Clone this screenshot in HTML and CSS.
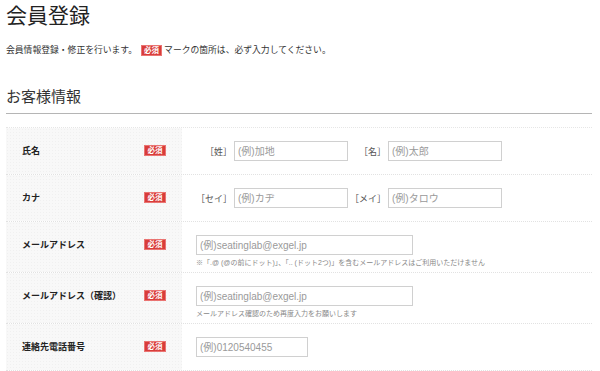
FILE: index.html
```html
<!DOCTYPE html>
<html lang="ja">
<head>
    <meta charset="UTF-8">
    <meta name="viewport" content="width=device-width, initial-scale=1.0">
    <title>会員登録</title>
    <link rel="stylesheet" href="styles.css">
</head>
<body>
    <h1 class="page-title">会員登録</h1>
    <p class="lead">会員情報登録・修正を行います。<span class="req req-inline">必須</span>マークの箇所は、必ず入力してください。</p>

    <h2 class="section-title">お客様情報</h2>

    <div class="form-table">
        <div class="row">
            <div class="label-cell"><span class="label">氏名</span><span class="req">必須</span></div>
            <div class="field-cell">
                <div class="pair">
                    <span class="pair-label">［姓］</span>
                    <input class="input input-s" type="text" placeholder="(例)加地">
                    <span class="pair-label">［名］</span>
                    <input class="input input-s" type="text" placeholder="(例)太郎">
                </div>
            </div>
        </div>
        <div class="row">
            <div class="label-cell"><span class="label">カナ</span><span class="req">必須</span></div>
            <div class="field-cell">
                <div class="pair">
                    <span class="pair-label">［セイ］</span>
                    <input class="input input-s" type="text" placeholder="(例)カヂ">
                    <span class="pair-label">［メイ］</span>
                    <input class="input input-s" type="text" placeholder="(例)タロウ">
                </div>
            </div>
        </div>
        <div class="row row-note">
            <div class="label-cell"><span class="label">メールアドレス</span><span class="req">必須</span></div>
            <div class="field-cell">
                <input class="input input-l" type="text" placeholder="(例)seatinglab@exgel.jp">
                <p class="note">※「.@ (@の前にドット)」、「.. (ドット2つ)」を含むメールアドレスはご利用いただけません</p>
            </div>
        </div>
        <div class="row row-note">
            <div class="label-cell"><span class="label">メールアドレス（確認）</span><span class="req">必須</span></div>
            <div class="field-cell">
                <input class="input input-l" type="text" placeholder="(例)seatinglab@exgel.jp">
                <p class="note">メールアドレス確認のため再度入力をお願いします</p>
            </div>
        </div>
        <div class="row">
            <div class="label-cell"><span class="label">連絡先電話番号</span><span class="req">必須</span></div>
            <div class="field-cell">
                <input class="input input-m" type="text" placeholder="(例)0120540455">
            </div>
        </div>
    </div>
</body>
</html>
```

FILE: styles.css
```css
body {
    font-family: 'Liberation Sans', 'Noto Sans CJK JP', sans-serif;
    color: #333;
    background: #fff;
    margin: 0;
    padding: 0 8px 0 6px;
}
.page-title {
    font-size: 21px;
    font-weight: normal;
    line-height: 28px;
    margin: 2px 0 0;
    color: #222;
}
.lead {
    font-size: 8.8px;
    line-height: 14px;
    margin: 13px 0 0;
    display: flex;
    align-items: center;
}
.section-title {
    font-size: 15px;
    font-weight: normal;
    line-height: 20px;
    margin: 30px 0 0;
    padding: 0 0 6px;
    border-bottom: 1px solid #b5b5b5;
}
.req {
    display: inline-block;
    width: 22px;
    height: 11px;
    line-height: 10px;
    box-sizing: border-box;
    background: #d83c3a;
    border: 1px solid #ea7472;
    color: #fff;
    font-size: 7.5px;
    font-weight: bold;
    text-align: center;
}
.req-inline { width: 21px; margin: 0 2px 0 4px; }

/* フォーム */
.form-table {
    margin-top: 13px;
    border-top: 1px dotted #e6e6e6;
}
.row {
    display: flex;
    border-bottom: 1px dotted #e2e2e2;
}
.label-cell {
    width: 176px;
    flex-shrink: 0;
    box-sizing: border-box;
    padding: 13px 16px;
    display: flex;
    justify-content: space-between;
    align-items: flex-start;
    background-color: #f8f8f8;
    background-image: radial-gradient(#f0f0f0 0.6px, transparent 0.8px);
    background-size: 3px 3px;
}
.label {
    font-size: 9px;
    font-weight: bold;
    line-height: 20px;
    color: #222;
}
.label-cell .req { margin-top: 4px; }
.field-cell {
    flex: 1;
    padding: 13px 14px;
}
.row-note .field-cell { padding-bottom: 4px; }
.pair {
    display: flex;
    align-items: center;
}
.pair-label {
    width: 36px;
    margin-right: 2px;
    text-align: right;
    font-size: 9px;
    color: #555;
    white-space: nowrap;
}
.pair .input-s + .pair-label { margin-left: 2px; }
.input {
    display: block;
    height: 20px;
    box-sizing: border-box;
    border: 1px solid #d0d0d0;
    padding: 0 3px;
    font-family: 'Liberation Sans', 'Noto Sans CJK JP', sans-serif;
    font-size: 10px;
    color: #333;
    margin: 0;
    outline: none;
}
.input::placeholder { color: #9a9a9a; }
.input-s { width: 114px; }
.input-l { width: 217px; }
.input-m { width: 112px; }
.note {
    font-size: 7px;
    line-height: 10px;
    color: #888;
    margin: 3px 0 0;
    white-space: nowrap;
}
```
